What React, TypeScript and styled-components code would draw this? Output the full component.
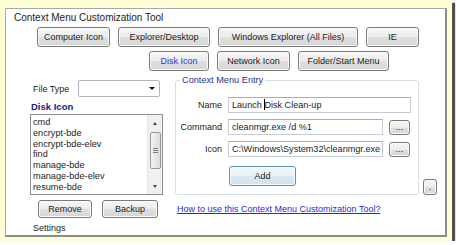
import React from 'react'
import styled, { createGlobalStyle, css } from 'styled-components'

const GlobalStyle = createGlobalStyle`
  html, body {
    margin: 0;
    padding: 0;
    background: #ffffff;
  }
  body {
    font-family: 'Liberation Sans', Arial, sans-serif;
    font-size: 9px;
    color: #1c1c1c;
  }
`

const Frame = styled.div`
  box-sizing: border-box;
  width: 452px;
  height: 241px;
  padding: 8px 0 0 5px;
  background: #fffdd3;
  box-shadow: 3px 3px 1px #505050;
`

const Window = styled.div`
  box-sizing: border-box;
  width: 442px;
  height: 229px;
  display: flex;
  flex-direction: column;
  background: #ffffff;
  border: 1px solid #a8a8a8;
  border-right: 2px solid #8c8c8c;
  border-bottom: 2px solid #8c8c8c;
`

const Title = styled.div`
  margin: 3px 0 0 8px;
  font-size: 10px;
  line-height: 12px;
`

const ButtonRow = styled.div<{ $indent: number; $top: number }>`
  display: flex;
  gap: 8px;
  padding-left: ${(p) => p.$indent}px;
  margin-top: ${(p) => p.$top}px;
`

const Button = styled.button<{ $w: number; $h?: number; $active?: boolean; $focus?: boolean }>`
  box-sizing: border-box;
  width: ${(p) => p.$w}px;
  height: ${(p) => p.$h ?? 20}px;
  padding: 0;
  font-family: inherit;
  font-size: 9px;
  color: ${(p) => (p.$active ? '#3434e2' : '#1c1c1c')};
  border: 1px solid #7a7a7a;
  border-radius: 3px;
  background: linear-gradient(#f6f6f6 0%, #ececec 50%, #e0e0e0 51%, #d6d6d6 100%);
  box-shadow: inset 0 0 0 1px #fbfbfb;
  ${(p) =>
    p.$focus &&
    css`
      border-color: #5b8fbd;
      background: linear-gradient(#f4f9fc 0%, #e9f2f8 50%, #dbe8f2 51%, #d1e2ef 100%);
    `}
`

const Main = styled.div`
  display: flex;
  align-items: flex-start;
  margin-top: 4px;
  padding-left: 24px;
`

const LeftCol = styled.div`
  width: 133px;
  display: flex;
  flex-direction: column;
`

const FileTypeRow = styled.div`
  display: flex;
  align-items: center;
  margin-top: 5px;
  padding-left: 3px;
  height: 17px;
`

const Label = styled.span`
  width: 45px;
`

const Combo = styled.div`
  box-sizing: border-box;
  width: 82px;
  height: 17px;
  display: flex;
  align-items: center;
  justify-content: flex-end;
  padding-right: 4px;
  border: 1px solid #b0b6bf;
  border-radius: 2px;
  background: #ffffff;
`

const ComboArrow = styled.span`
  width: 0;
  height: 0;
  border-left: 3px solid transparent;
  border-right: 3px solid transparent;
  border-top: 3px solid #111;
`

const SectionHeading = styled.div`
  margin: 4px 0 0 1px;
  font-size: 9.5px;
  font-weight: bold;
  line-height: 12px;
  color: #1a1a86;
`

const ListBox = styled.div`
  box-sizing: border-box;
  margin-top: 1px;
  width: 133px;
  height: 81px;
  display: flex;
  border: 1px solid #8a9099;
  background: #ffffff;
`

const ListItems = styled.div`
  flex: 1;
  padding: 2px 0 0 2px;
  overflow: hidden;
`

const ListItem = styled.div`
  font-size: 9.2px;
  line-height: 10.8px;
  white-space: nowrap;
`

const ScrollBar = styled.div`
  width: 14px;
  display: flex;
  flex-direction: column;
  align-items: center;
  background: #f0f0f0;
  border-left: 1px solid #e4e4e4;
`

const ScrollArrow = styled.div<{ $down?: boolean }>`
  height: 16px;
  width: 100%;
  display: flex;
  align-items: center;
  justify-content: center;
  &::after {
    content: '';
    border-left: 2.5px solid transparent;
    border-right: 2.5px solid transparent;
    ${(p) =>
      p.$down
        ? css`border-top: 3px solid #444;`
        : css`border-bottom: 3px solid #444;`}
  }
`

const Thumb = styled.div`
  box-sizing: border-box;
  width: 11px;
  height: 37px;
  margin-top: 1px;
  display: flex;
  flex-direction: column;
  align-items: center;
  justify-content: center;
  gap: 1px;
  border: 1px solid #989898;
  border-radius: 2px;
  background: linear-gradient(90deg, #f4f4f4, #dcdcdc);
`

const Grip = styled.span`
  width: 5px;
  height: 1px;
  background: #7d7d7d;
`

const ScrollSpace = styled.div`
  flex: 1;
`

const SmallButtons = styled.div`
  display: flex;
  gap: 10px;
  margin: 5px 0 0 8px;
`

const Settings = styled.div`
  margin: 4px 0 0 3px;
  line-height: 12px;
`

const RightArea = styled.div`
  margin-left: 12px;
  display: grid;
  grid-template-columns: 244px 14px;
  column-gap: 4px;
  align-items: end;
  align-content: start;
`

const Group = styled.fieldset`
  box-sizing: border-box;
  margin: 0;
  width: 244px;
  height: 120px;
  padding: 12px 6px 0 0;
  border: 1px solid #d5dee6;
  border-radius: 3px;
`

const Legend = styled.legend`
  margin-left: 4px;
  padding: 0 2px;
  font-size: 9.2px;
  line-height: 10px;
  color: #23359a;
`

const Fields = styled.div`
  display: grid;
  grid-template-columns: 46px 155px 21px;
  column-gap: 6px;
  row-gap: 6px;
  align-items: center;
  & > :nth-child(3n) {
    margin-left: 1px;
  }
`

const FieldLabel = styled.span`
  text-align: right;
  font-size: 9px;
`

const TextBox = styled.div<{ $wide?: boolean }>`
  box-sizing: border-box;
  height: 16px;
  padding: 0 2px 0 3px;
  overflow: hidden;
  white-space: nowrap;
  font-size: 9.1px;
  line-height: 14px;
  border: 1px solid #c3ccd7;
  border-top-color: #a6adb6;
  background: #ffffff;
  ${(p) =>
    p.$wide &&
    css`
      grid-column: 2 / span 2;
      margin-right: -1px;
    `}
`

const Caret = styled.span`
  display: inline-block;
  width: 1px;
  height: 11px;
  margin-right: -1px;
  vertical-align: -2px;
  background: #000;
`

const AddRow = styled.div`
  grid-column: 2;
  margin: 3px 0 0 15px;
`

const Link = styled.a`
  grid-column: 1 / span 2;
  margin: 8px 0 0 2px;
  font-size: 9px;
  line-height: 12px;
  color: #2a2ad2;
  text-decoration: underline;
`

const topButtons = [
  { label: 'Computer Icon', w: 73 },
  { label: 'Explorer/Desktop', w: 92 },
  { label: 'Windows Explorer (All Files)', w: 140 },
  { label: 'IE', w: 53 },
]

const iconButtons = [
  { label: 'Disk Icon', w: 60, active: true },
  { label: 'Network Icon', w: 73 },
  { label: 'Folder/Start Menu', w: 91 },
]

const handlers = ['cmd', 'encrypt-bde', 'encrypt-bde-elev', 'find', 'manage-bde', 'manage-bde-elev', 'resume-bde']

const App = () => {
  return (
    <>
      <GlobalStyle />
      <Frame>
        <Window>
          <Title>Context Menu Customization Tool</Title>
          <ButtonRow $indent={31} $top={3}>
            {topButtons.map((b) => (
              <Button key={b.label} $w={b.w}>
                {b.label}
              </Button>
            ))}
          </ButtonRow>
          <ButtonRow $indent={143} $top={4}>
            {iconButtons.map((b) => (
              <Button key={b.label} $w={b.w} $active={b.active}>
                {b.label}
              </Button>
            ))}
          </ButtonRow>
          <Main>
            <LeftCol>
              <FileTypeRow>
                <Label>File Type</Label>
                <Combo>
                  <ComboArrow />
                </Combo>
              </FileTypeRow>
              <SectionHeading>Disk Icon</SectionHeading>
              <ListBox>
                <ListItems>
                  {handlers.map((h) => (
                    <ListItem key={h}>{h}</ListItem>
                  ))}
                </ListItems>
                <ScrollBar>
                  <ScrollArrow />
                  <Thumb>
                    <Grip />
                    <Grip />
                    <Grip />
                  </Thumb>
                  <ScrollSpace />
                  <ScrollArrow $down />
                </ScrollBar>
              </ListBox>
              <SmallButtons>
                <Button $w={54} $h={18}>
                  Remove
                </Button>
                <Button $w={56} $h={18}>
                  Backup
                </Button>
              </SmallButtons>
              <Settings>Settings</Settings>
            </LeftCol>
            <RightArea>
              <Group>
                <Legend>Context Menu Entry</Legend>
                <Fields>
                  <FieldLabel>Name</FieldLabel>
                  <TextBox $wide>
                    Launch <Caret />Disk Clean-up
                  </TextBox>
                  <FieldLabel>Command</FieldLabel>
                  <TextBox>cleanmgr.exe /d %1</TextBox>
                  <Button $w={21} $h={15}>
                    ...
                  </Button>
                  <FieldLabel>Icon</FieldLabel>
                  <TextBox>C:\Windows\System32\cleanmgr.exe</TextBox>
                  <Button $w={21} $h={15}>
                    ...
                  </Button>
                  <AddRow>
                    <Button $w={67} $focus>
                      Add
                    </Button>
                  </AddRow>
                </Fields>
              </Group>
              <Button $w={14} $h={16}>
                .
              </Button>
              <Link href="#">How to use this Context Menu Customization Tool?</Link>
            </RightArea>
          </Main>
        </Window>
      </Frame>
    </>
  )
}

export default App
